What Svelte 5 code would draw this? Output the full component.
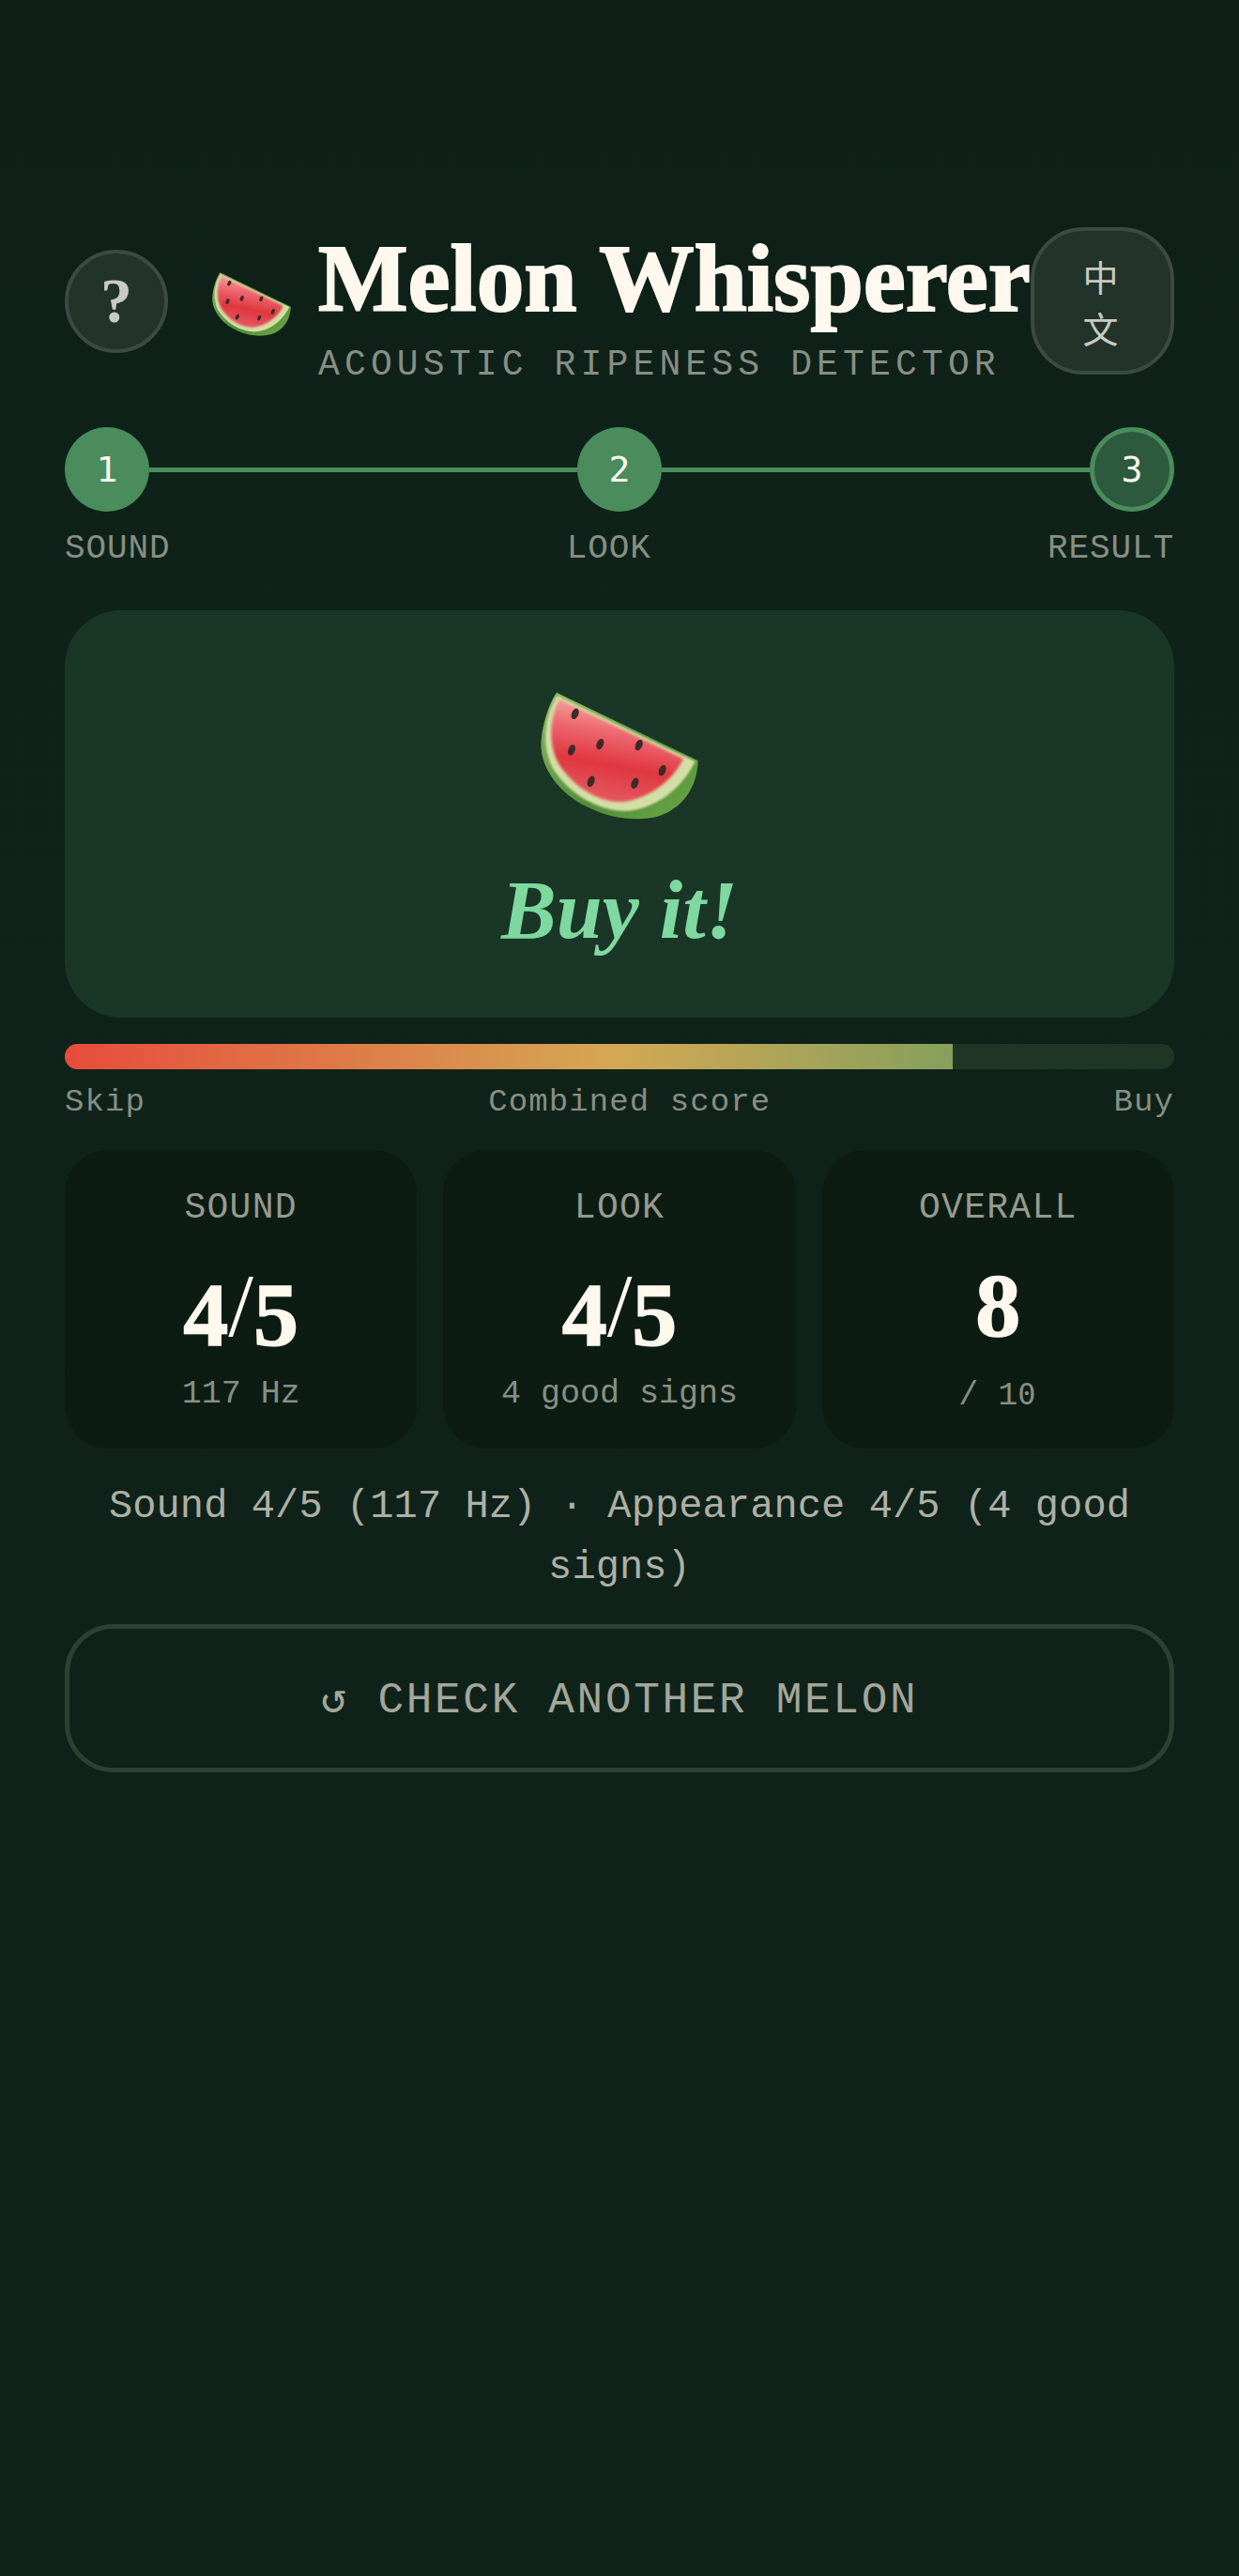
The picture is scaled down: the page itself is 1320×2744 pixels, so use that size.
<script>
	const steps = [
		{ n: 1, label: 'SOUND', current: false },
		{ n: 2, label: 'LOOK', current: false },
		{ n: 3, label: 'RESULT', current: true }
	];
	const seeds = [
		[406, 236], [486, 333], [610, 336], [395, 352], [457, 452], [597, 458], [685, 417]
	];
	const score = 8;
</script>

{#snippet melon(cls)}
	<svg class={cls} viewBox="296 166 504 408" aria-hidden="true">
		<defs>
			<linearGradient id="flesh" x1="0.62" y1="0.08" x2="0.42" y2="0.92">
				<stop offset="0" stop-color="#f6a79e" />
				<stop offset="0.3" stop-color="#ee6a72" />
				<stop offset="0.68" stop-color="#e0373f" />
				<stop offset="1" stop-color="#e4525a" />
			</linearGradient>
			<linearGradient id="rind" x1="0" y1="0" x2="1" y2="1">
				<stop offset="0" stop-color="#8fb566" />
				<stop offset="0.6" stop-color="#4f8f36" />
				<stop offset="1" stop-color="#6fa648" />
			</linearGradient>
			<filter id="soft" x="-10%" y="-10%" width="120%" height="120%">
				<feGaussianBlur stdDeviation="5" />
			</filter>
			<filter id="softer" x="-10%" y="-10%" width="120%" height="120%">
				<feGaussianBlur stdDeviation="3" />
			</filter>
		</defs>
		<path fill="url(#rind)" d="M347 168 L799 386 C797 470 750 540 670 564 C600 580 520 572 450 536 C350 490 290 400 298 320 C303 260 325 200 347 168 Z" />
		<path fill="#d3dea6" filter="url(#softer)" d="M349 178 L790 388 C760 450 690 532 580 546 C480 552 382 488 334 408 C300 340 304 250 349 178 Z" />
		<path fill="url(#flesh)" filter="url(#soft)" d="M356 190 L752 380 C722 442 650 508 555 518 C470 518 395 462 353 395 C320 332 324 250 356 190 Z" />
		{#each seeds as [cx, cy]}
			<ellipse {cx} {cy} rx="11" ry="18" fill="#3d2b29" transform="rotate(22 {cx} {cy})" />
		{/each}
	</svg>
{/snippet}

<main class="page">
	<header class="header">
		<button class="help">?</button>
		<div class="brand">
			{@render melon('logo')}
			<div class="brand-text">
				<h1>Melon Whisperer</h1>
				<p>ACOUSTIC RIPENESS DETECTOR</p>
			</div>
		</div>
		<button class="lang">中文</button>
	</header>

	<div class="stepper">
		{#each steps as step, i}
			{#if i > 0}<span class="line"></span>{/if}
			<span class="dot" class:current={step.current}>{step.n}</span>
		{/each}
	</div>
	<div class="step-labels">
		{#each steps as step}
			<span>{step.label}</span>
		{/each}
	</div>

	<section class="verdict">
		{@render melon('verdict-melon')}
		<h2>Buy it!</h2>
	</section>

	<div class="bar"><div class="fill" style="width: {score * 10}%"></div></div>
	<div class="bar-labels">
		<span>Skip</span>
		<span>Combined score</span>
		<span>Buy</span>
	</div>

	<div class="stats">
		<div class="stat">
			<div class="stat-label">SOUND</div>
			<div class="stat-value"><span class="old">4</span><span class="slash">/</span><span class="old">5</span></div>
			<div class="stat-sub">117 Hz</div>
		</div>
		<div class="stat">
			<div class="stat-label">LOOK</div>
			<div class="stat-value"><span class="old">4</span><span class="slash">/</span><span class="old">5</span></div>
			<div class="stat-sub">4 good signs</div>
		</div>
		<div class="stat">
			<div class="stat-label">OVERALL</div>
			<div class="stat-value">8</div>
			<div class="stat-sub">/ 1<span class="zero">0</span></div>
		</div>
	</div>

	<p class="summary">Sound 4/5 (117 Hz) · Appearance 4/5 (4 good signs)</p>

	<button class="again">↺ CHECK ANOTHER MELON</button>
</main>

<style>
	:global(body) {
		background: #0f2118;
	}

	.page {
		box-sizing: border-box;
		min-height: 2744px;
		padding: 242px 69px 0;
		font-family: "Liberation Mono", monospace;
		background: linear-gradient(180deg, #0d1f16 0, #0f2219 18%, #10231a 100%);
	}

	button {
		font-family: inherit;
		cursor: pointer;
	}

	.header {
		display: flex;
		align-items: center;
		justify-content: space-between;
	}

	.help {
		width: 110px;
		height: 110px;
		flex: none;
		padding: 0;
		border-radius: 50%;
		border: 4px solid #3b4a42;
		background: #22332a;
		color: #c9cac1;
		font-family: "Liberation Serif", serif;
		font-weight: 700;
		font-size: 68px;
	}

	.brand {
		display: flex;
		align-items: center;
		gap: 29px;
		margin-left: 47px;
		flex: 1;
	}

	.logo {
		width: 84px;
		height: 68px;
		margin-top: 6px;
	}

	.brand-text {
		height: 157px;
	}

	.brand-text h1 {
		margin: 0;
		font-family: "Liberation Serif", serif;
		font-size: 101.3px;
		line-height: 110px;
		font-weight: 700;
		color: #fff8ef;
		-webkit-text-stroke: 2px #fff8ef;
		white-space: nowrap;
	}

	.brand-text p {
		margin: 15px 0 0;
		font-size: 38px;
		line-height: 44px;
		letter-spacing: 5.15px;
		color: #878f85;
		white-space: nowrap;
	}

	.lang {
		width: 153px;
		height: 157px;
		flex: none;
		padding: 0 42px 0 38px;
		border-radius: 56px;
		border: 4px solid #3b4a42;
		background: #22332a;
		color: #c9cac1;
		font-family: "Noto Sans CJK SC", sans-serif;
		font-size: 38px;
		line-height: 55px;
	}

	.stepper {
		display: flex;
		align-items: center;
		margin-top: 56px;
	}

	.dot {
		box-sizing: border-box;
		width: 90px;
		height: 90px;
		flex: none;
		display: flex;
		align-items: center;
		justify-content: center;
		border-radius: 50%;
		background: #4a8c5c;
		color: #fff8ef;
		font-family: "DejaVu Sans Mono", monospace;
		font-size: 38px;
	}

	.dot.current {
		background: #2d5a3d;
		border: 5px solid #4a8c5c;
	}

	.line {
		flex: 1;
		height: 5px;
		background: #4a8c5c;
	}

	.step-labels {
		display: flex;
		justify-content: space-between;
		margin-top: 18px;
		font-size: 36px;
		line-height: 44px;
		letter-spacing: 0.9px;
		color: #878f85;
	}

	.verdict {
		margin-top: 43px;
		height: 434px;
		box-sizing: border-box;
		padding-top: 87px;
		display: flex;
		flex-direction: column;
		align-items: center;
		border-radius: 60px;
		background: #1a3626;
	}

	.verdict-melon {
		width: 168px;
		height: 136px;
	}

	.verdict h2 {
		margin: 47px 0 0;
		font-family: "Liberation Serif", serif;
		font-style: italic;
		font-weight: 700;
		font-size: 88px;
		line-height: 100px;
		color: #7fd8a0;
	}

	.bar {
		margin-top: 28px;
		height: 27px;
		border-radius: 14px;
		overflow: hidden;
		background: linear-gradient(90deg, #2b3a27, #1d3626);
	}

	.fill {
		height: 100%;
		background: linear-gradient(90deg, #e84c3c, #d4a853 62%, #85a05c);
	}

	.bar-labels {
		display: flex;
		justify-content: space-between;
		margin-top: 13px;
		font-size: 34px;
		line-height: 44px;
		letter-spacing: 1.1px;
		color: #878f85;
	}

	.stats {
		display: grid;
		grid-template-columns: repeat(3, 1fr);
		gap: 28px;
		margin-top: 29px;
	}

	.stat {
		box-sizing: border-box;
		height: 318px;
		padding-top: 40px;
		text-align: center;
		border-radius: 46px;
		background: #0c1c12;
	}

	.stat-label {
		font-size: 38px;
		line-height: 44px;
		letter-spacing: 1.3px;
		color: #979b90;
	}

	.stat-value {
		margin-top: 34px;
		height: 96px;
		font-family: "Liberation Serif", serif;
		font-weight: 700;
		font-size: 96px;
		line-height: 96px;
		color: #fff8ef;
		-webkit-text-stroke: 1.5px #fff8ef;
	}

	.old {
		vertical-align: -10px;
	}

	.slash {
		font-weight: 400;
		-webkit-text-stroke: 0;
	}

	.stat-sub {
		margin-top: 24px;
		font-size: 35px;
		line-height: 44px;
		color: #878f85;
	}

	.zero {
		font-family: "DejaVu Sans Mono", monospace;
		font-size: 32px;
		letter-spacing: 1.7px;
	}

	.summary {
		margin: 30px 0 0;
		text-align: center;
		font-size: 42px;
		line-height: 65px;
		letter-spacing: 0.1px;
		color: #aeb0a5;
	}

	.again {
		display: block;
		width: 100%;
		height: 158px;
		margin-top: 27px;
		border-radius: 52px;
		border: 5px solid #2c4034;
		background: transparent;
		color: #a3a79b;
		font-size: 46px;
		letter-spacing: 2.7px;
	}
</style>
